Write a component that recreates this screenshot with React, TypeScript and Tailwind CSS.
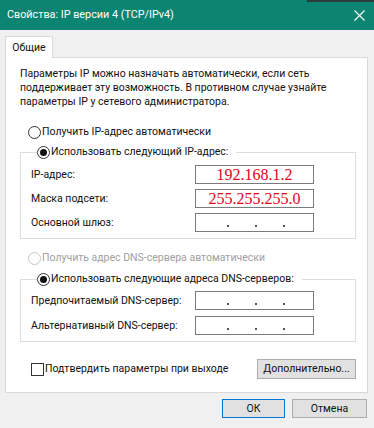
import React from "react";

function Radio({ checked, disabled }: { checked?: boolean; disabled?: boolean }) {
  return (
    <span
      className={`flex h-[13px] w-[13px] shrink-0 items-center justify-center rounded-full border bg-white ${
        disabled ? "border-[#c4c4c4]" : "border-[#333333]"
      }`}
    >
      {checked && <span className="h-[7px] w-[7px] rounded-full bg-[#111111]" />}
    </span>
  );
}

function IpInput({ value }: { value?: string }) {
  return (
    <div className="flex h-[19px] w-[119px] shrink-0 items-center justify-center border border-[#7a7a7a] bg-white">
      {value ? (
        <span className="text-[16px] leading-none text-[#e4001b] [font-family:'Liberation_Serif',serif]">
          {value}
        </span>
      ) : (
        <div className="flex w-full items-center pl-[31px] pt-[7px] gap-[26px]">
          <span className="h-[2px] w-[2px] bg-[#555]" />
          <span className="h-[2px] w-[2px] bg-[#555]" />
          <span className="h-[2px] w-[2px] bg-[#555]" />
        </div>
      )}
    </div>
  );
}

function Row({ label, value }: { label: string; value?: string }) {
  return (
    <div className="flex items-center justify-between">
      <span className="whitespace-nowrap">{label}</span>
      <IpInput value={value} />
    </div>
  );
}

export default function App() {
  return (
    <div className="relative flex h-[428px] w-[374px] flex-col overflow-hidden bg-[#f0f0f0] text-[10.5px] leading-[16px] text-[#111] [font-family:Roboto,sans-serif]">
      {/* title bar */}
      <div className="flex h-[30px] shrink-0 items-center justify-between bg-[#0b8472] pl-[7px] pr-[9px] text-white">
        <span className="text-[10.8px]">Свойства: IP версии 4 (TCP/IPv4)</span>
        <svg width="11" height="11" viewBox="0 0 11 11" className="mt-[1px]">
          <path d="M0.5 0.5 L10.5 10.5 M10.5 0.5 L0.5 10.5" stroke="white" strokeWidth="1.1" fill="none" />
        </svg>
      </div>
      <div className="absolute right-0 top-0 h-[2px] w-[67px] bg-[#2c3b3a]" />

      <div className="flex flex-col px-[5px] pt-[6px]">
        {/* tab */}
        <div className="relative z-10 mb-[-1px] flex h-[22px] w-[48px] items-center justify-center border border-b-0 border-[#d9d9d9] bg-white">
          Общие
        </div>
        {/* panel */}
        <div className="flex w-[363px] flex-col border border-[#d9d9d9] bg-white pl-[14px] pr-[11px] pt-[9px] pb-[13px]">
          <p className="leading-[14px] whitespace-nowrap">
            Параметры IP можно назначать автоматически, если сеть
            <br />
            поддерживает эту возможность. В противном случае узнайте
            <br />
            параметры IP у сетевого администратора.
          </p>

          <label className="mt-[15px] ml-[8px] flex items-center gap-[1px]">
            <Radio />
            <span>Получить IP-адрес автоматически</span>
          </label>

          <fieldset className="mt-[4px] border border-[#dcdcdc] pl-[10px] pr-[41px] pb-[6px]">
            <legend className="ml-[6px] flex items-center gap-[1px] pr-[8px]">
              <Radio checked />
              <span>Использовать следующий IP-адрес:</span>
            </legend>
            <div className="flex flex-col gap-[5px] pt-[5px]">
              <Row label="IP-адрес:" value="192.168.1.2" />
              <Row label="Маска подсети:" value="255.255.255.0" />
              <Row label="Основной шлюз:" />
            </div>
          </fieldset>

          <label className="mt-[11px] ml-[8px] flex items-center gap-[1px] text-[#a0a0a0]">
            <Radio disabled />
            <span>Получить адрес DNS-сервера автоматически</span>
          </label>

          <fieldset className="mt-[5px] border border-[#dcdcdc] pl-[10px] pr-[41px] pb-[6px]">
            <legend className="ml-[6px] flex items-center gap-[1px] pr-[8px]">
              <Radio checked />
              <span className="whitespace-nowrap">Использовать следующие адреса DNS-серверов:</span>
            </legend>
            <div className="flex flex-col gap-[6px] pt-[4px]">
              <Row label="Предпочитаемый DNS-сервер:" />
              <Row label="Альтернативный DNS-сервер:" />
            </div>
          </fieldset>

          <div className="mt-[17px] flex items-center justify-between">
            <label className="ml-[11px] flex items-center gap-[1px]">
              <span className="h-[13px] w-[13px] border border-[#333333] bg-white" />
              <span>Подтвердить параметры при выходе</span>
            </label>
            <button className="flex h-[20px] w-[99px] items-center justify-center border border-[#adadad] bg-[#e1e1e1]">
              Дополнительно...
            </button>
          </div>
        </div>
      </div>

      <div className="flex justify-end gap-[7px] pr-[7px] pt-[6px]">
        <button className="flex h-[19px] w-[63px] items-center justify-center border border-[#0078d7] bg-[#e1e1e1]">
          ОК
        </button>
        <button className="flex h-[19px] w-[75px] items-center justify-center border border-[#adadad] bg-[#e1e1e1]">
          Отмена
        </button>
      </div>
    </div>
  );
}
